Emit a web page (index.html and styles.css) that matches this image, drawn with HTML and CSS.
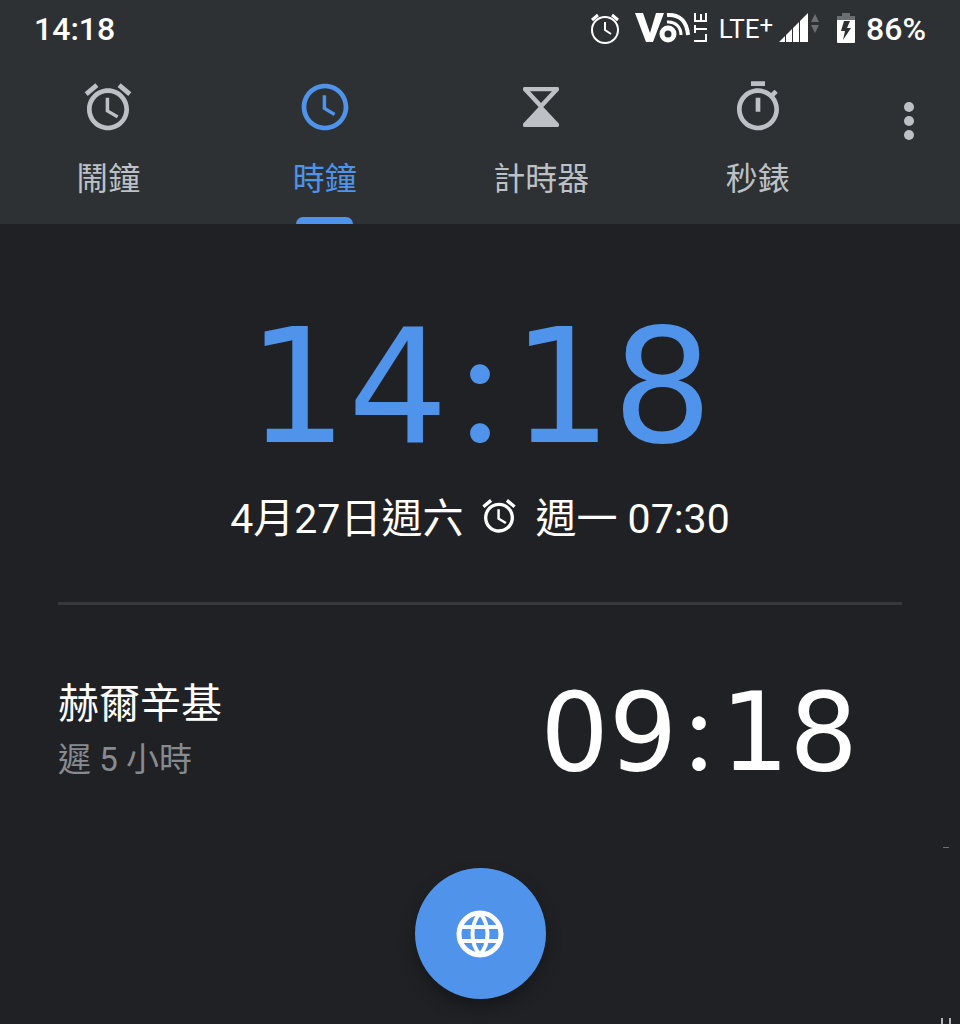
FILE: index.html
```html
<!DOCTYPE html>
<html lang="zh-Hant">
<head>
  <meta charset="UTF-8">
  <meta name="viewport" content="width=device-width, initial-scale=1.0">
  <title>時鐘</title>
  <link rel="stylesheet" href="styles.css">
</head>
<body>
  <!-- shared alarm icon -->
  <svg class="sprite" aria-hidden="true">
    <symbol id="alarm" viewBox="0 0 24 24">
      <path d="M22 5.72l-4.6-3.86-1.29 1.53 4.6 3.86L22 5.72zM7.88 3.39L6.6 1.86 2 5.71l1.29 1.53 4.59-3.85zM12.5 8H11v6l4.75 2.85.75-1.23-4-2.37V8zM12 4c-4.97 0-9 4.03-9 9s4.02 9 9 9c4.97 0 9-4.03 9-9s-4.03-9-9-9zm0 16c-3.87 0-7-3.13-7-7s3.13-7 7-7 7 3.13 7 7-3.13 7-7 7z"/>
    </symbol>
  </svg>

  <header class="header">
    <div class="status-bar">
      <span class="status-time">14:18</span>
      <div class="status-icons">
        <svg class="status-alarm" viewBox="0 0 32 34" aria-hidden="true">
          <g fill="none" stroke="currentColor" stroke-width="2">
            <circle cx="16" cy="18" r="13"/>
            <path d="M16 10v8l6 4"/>
            <path d="M3 8l6-5M23 3l6 5" stroke-width="3"/>
          </g>
        </svg>
        <svg class="status-volte" viewBox="0 0 74 34" aria-hidden="true">
          <path d="M0 1h8l7 20 6-20h8L18 30h-7z"/>
          <g fill="none" stroke="currentColor">
            <circle cx="33" cy="22" r="6" stroke-width="5"/>
            <path d="M32 10c8-1 14 5 14 13" stroke-width="3"/>
            <path d="M32 3c13-1 20 7 21 20" stroke-width="4"/>
            <path d="M59 29h13M71 30v-8M59 17h13M60 21v-8M60 9h11M60 10V1M66 10V2M71 10V1" stroke-width="2"/>
          </g>
        </svg>
        <span class="status-lte">LTE<sup>+</sup></span>
        <svg class="status-signal" viewBox="0 0 42 32" aria-hidden="true">
          <path d="M0 29l6-6v6zM7 22l6-6v13H7zM14 15l6-6v20h-6zM21 8l8-8v29h-8z"/>
          <path class="dim" d="M36 1l4 8h-8zM32 12h8l-4 8z"/>
        </svg>
        <svg class="status-battery" viewBox="0 0 18 32" aria-hidden="true">
          <path class="dim" d="M5 0h8v3h5v5H0V3h5z"/>
          <path d="M0 7h18v22q0 1-1 1H1q-1 0-1-1z"/>
          <path class="bolt" d="M7 8h6l-3 7h4L6 27l2-9H4z"/>
        </svg>
        <span class="status-percent">86%</span>
      </div>
    </div>

    <nav class="tabs">
      <button class="tab" type="button">
        <svg class="tab-icon" aria-hidden="true"><use href="#alarm"/></svg>
        <span>鬧鐘</span>
      </button>
      <button class="tab active" type="button">
        <svg class="tab-icon" viewBox="0 0 24 24" aria-hidden="true">
          <path d="M11.99 2C6.47 2 2 6.48 2 12s4.47 10 9.99 10C17.52 22 22 17.52 22 12S17.52 2 11.99 2zM12 20c-4.42 0-8-3.58-8-8s3.58-8 8-8 8 3.58 8 8-3.58 8-8 8zM12.5 7H11v6l4.75 2.85.75-1.23-4-2.37z"/>
        </svg>
        <span>時鐘</span>
      </button>
      <button class="tab" type="button">
        <svg class="tab-icon" viewBox="0 0 24 24" aria-hidden="true">
          <path fill-rule="evenodd" d="M5 3.4h14q.7 0 .7.6v.8L13 12l6.7 7.2v.8q0 .6-.7.6H5q-.7 0-.7-.6v-.8L11 12 4.3 4.8V4q0-.6.7-.6zM7.3 5.2L12 10.3l4.7-5.1z"/>
        </svg>
        <span>計時器</span>
      </button>
      <button class="tab" type="button">
        <svg class="tab-icon" viewBox="0 0 24 24" aria-hidden="true">
          <path d="M15 1H9v2h6V1zm-4 13h2V8h-2v6zm8.03-6.61l1.42-1.42c-.43-.51-.9-.99-1.41-1.41l-1.42 1.42C16.07 4.74 14.12 4 12 4c-4.97 0-9 4.03-9 9s4.02 9 9 9 9-4.03 9-9c0-2.12-.74-4.07-1.97-5.61zM12 20c-3.87 0-7-3.13-7-7s3.13-7 7-7 7 3.13 7 7-3.13 7-7 7z"/>
        </svg>
        <span>秒錶</span>
      </button>
      <button class="menu" type="button" aria-label="更多選項">
        <svg class="menu-icon" viewBox="0 0 10 38" aria-hidden="true">
          <circle cx="5" cy="5" r="5"/>
          <circle cx="5" cy="19" r="5"/>
          <circle cx="5" cy="33" r="5"/>
        </svg>
      </button>
    </nav>
  </header>

  <main class="clock">
    <time class="main-time"><span>14</span><span class="colon">:</span><span>18</span></time>
    <div class="date">
      <span>4月27日週六</span>
      <svg class="date-icon" aria-hidden="true"><use href="#alarm"/></svg>
      <span>週一 07:30</span>
    </div>

    <section class="city">
      <div>
        <h2 class="city-name">赫爾辛基</h2>
        <p class="city-offset">遲 5 小時</p>
      </div>
      <time class="city-time"><span>09</span><span class="colon">:</span><span>18</span></time>
    </section>

    <button class="add-city" type="button" aria-label="新增城市">
      <svg class="globe" viewBox="0 0 48 48" aria-hidden="true">
        <g fill="none" stroke="currentColor" stroke-width="5">
          <circle cx="24" cy="24" r="21"/>
          <path d="M24 3c-10 12-10 30 0 42M24 3c10 12 10 30 0 42" stroke-width="4"/>
          <path d="M5 17h38M5 31h38" stroke-width="4"/>
        </g>
      </svg>
    </button>
  </main>

  <!-- edge handle, partly outside the screen -->
  <svg class="edge-handle" viewBox="0 0 12 178" aria-hidden="true">
    <path class="dim" d="M3 1h6v1H3z"/>
    <path d="M1 172h2v6H1zM9 172h2v6H9z"/>
  </svg>
</body>
</html>
```

FILE: styles.css
```css
* {
  box-sizing: border-box;
}

body {
  position: relative;
  min-height: 100vh;
  margin: 0;
  background-color: #202125;
  color: #ffffff;
  font-family: Roboto, "Noto Sans CJK TC", sans-serif;
}

button {
  padding: 0;
  border: none;
  background: none;
  color: inherit;
  font: inherit;
  cursor: pointer;
}

svg {
  display: block;
  fill: currentColor;
}

.sprite {
  position: absolute;
  width: 0;
  height: 0;
}

.dim {
  fill: #6c6f71;
}

.header {
  background-color: #2d3133;
}

/* Status bar */
.status-bar {
  display: flex;
  align-items: center;
  justify-content: space-between;
  height: 58px;
  padding: 0 34px;
  font-size: 32px;
  font-weight: 500;
}

.status-icons {
  display: flex;
  align-items: center;
}

.status-alarm {
  width: 32px;
  height: 34px;
  margin-right: 14px;
}

.status-volte {
  width: 74px;
  height: 34px;
  margin-right: 10px;
}

.status-lte {
  margin-right: 6px;
  font-size: 26px;
  font-weight: 400;
  line-height: 30px;
}

.status-lte sup {
  font-size: 24px;
  line-height: 0;
  vertical-align: 5px;
}

.status-signal {
  width: 42px;
  height: 32px;
  margin-right: 16px;
}

.status-battery {
  width: 18px;
  height: 32px;
  margin-right: 11px;
}

.bolt {
  fill: #2d3133;
}

/* Tabs */
.tabs {
  display: flex;
  height: 166px;
}

.tab {
  display: flex;
  flex: 1;
  flex-direction: column;
  align-items: center;
  padding-top: 21px;
  color: #bdc1c6;
  font-size: 32px;
  line-height: 48px;
}

.tab-icon {
  width: 56px;
  height: 56px;
  margin-bottom: 20px;
}

.tab.active {
  color: #4f94ea;
}

.tab.active::after {
  content: "";
  width: 57px;
  height: 7px;
  margin-top: auto;
  border-radius: 7px 7px 0 0;
  background-color: #4f94ea;
}

.menu {
  display: flex;
  justify-content: center;
  width: 94px;
  padding: 44px 8px 0 0;
  color: #bdc1c6;
}

.menu-icon {
  width: 10px;
  height: 38px;
}

/* Clock */
.clock {
  display: flex;
  flex-direction: column;
  align-items: center;
  padding: 77px 58px 16px;
}

.main-time,
.city-time {
  display: flex;
  align-items: baseline;
  font-family: "DejaVu Sans", sans-serif;
}

.colon {
  font-family: Lato, sans-serif;
}

.main-time {
  gap: 12px;
  color: #4f94ea;
  font-size: 158px;
  line-height: 160px;
}

.date {
  display: flex;
  align-items: center;
  gap: 16px;
  margin-top: 26px;
  font-size: 41px;
  line-height: 52px;
}

.date-icon {
  width: 40px;
  height: 40px;
  margin-bottom: 6px;
}

.city {
  display: flex;
  align-items: center;
  justify-content: space-between;
  width: 100%;
  margin-top: 57px;
  padding: 68px 44px 0 0;
  border-top: 3px solid #36383c;
}

.city-name {
  margin: 0;
  font-size: 41px;
  font-weight: 400;
  line-height: 58px;
}

.city-offset {
  margin: 0;
  color: #868b90;
  font-size: 33px;
  line-height: 54px;
}

.city-time {
  gap: 8px;
  font-size: 108px;
  line-height: 110px;
}

.add-city {
  display: flex;
  align-items: center;
  justify-content: center;
  width: 131px;
  height: 131px;
  margin-top: 80px;
  border-radius: 50%;
  background-color: #4f94ea;
  box-shadow: 0 8px 16px rgba(0, 0, 0, 0.3);
}

.globe {
  width: 48px;
  height: 48px;
}

.edge-handle {
  position: absolute;
  right: 8px;
  bottom: 0;
  width: 12px;
  height: 178px;
  color: #b4b4b4;
}
```
